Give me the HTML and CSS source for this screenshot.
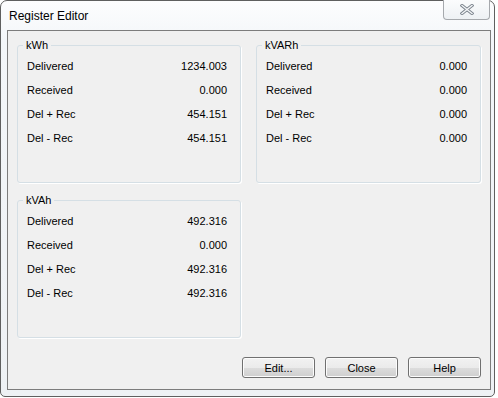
FILE: index.html
```html
<!DOCTYPE html>
<html lang="en">
  <head>
    <meta charset="UTF-8" />
    <title>Register Editor</title>
    <link rel="stylesheet" href="styles.css">
  </head>
  <body>
    <div class="window">
      <div class="titlebar">
        <span class="title">Register Editor</span>
        <div class="close-btn">
          <svg width="14" height="11" viewBox="0 0 14 11">
            <path d="M2 1.5 L12 9.5 M12 1.5 L2 9.5" stroke="#7b838c" stroke-width="3.2" stroke-linecap="square" fill="none" />
            <path d="M2 1.5 L12 9.5 M12 1.5 L2 9.5" stroke="#f4f6f8" stroke-width="1.4" stroke-linecap="square" fill="none" />
          </svg>
        </div>
      </div>
      <div class="client">
        <div class="groups">
          <div class="group">
            <span class="legend">kWh</span>
            <div class="row"><span>Delivered</span><span>1234.003</span></div>
            <div class="row"><span>Received</span><span>0.000</span></div>
            <div class="row"><span>Del + Rec</span><span>454.151</span></div>
            <div class="row"><span>Del - Rec</span><span>454.151</span></div>
          </div>
          <div class="group">
            <span class="legend">kVARh</span>
            <div class="row"><span>Delivered</span><span>0.000</span></div>
            <div class="row"><span>Received</span><span>0.000</span></div>
            <div class="row"><span>Del + Rec</span><span>0.000</span></div>
            <div class="row"><span>Del - Rec</span><span>0.000</span></div>
          </div>
          <div class="group">
            <span class="legend">kVAh</span>
            <div class="row"><span>Delivered</span><span>492.316</span></div>
            <div class="row"><span>Received</span><span>0.000</span></div>
            <div class="row"><span>Del + Rec</span><span>492.316</span></div>
            <div class="row"><span>Del - Rec</span><span>492.316</span></div>
          </div>
        </div>
        <div class="buttons">
          <button>Edit...</button>
          <button>Close</button>
          <button>Help</button>
        </div>
      </div>
    </div>
  </body>
</html>
```

FILE: styles.css
```css
body {
  margin: 0;
  padding: 0;
  background-color: #fff;
  font-family: "Liberation Sans", Arial, sans-serif;
  color: #000;
}
.window {
  width: 495px;
  height: 397px;
  box-sizing: border-box;
  border: 1px solid #5f5f5f;
  border-radius: 7px 7px 5px 5px;
  background: linear-gradient(#fdfdfe, #f3f6f9 40px, #eef1f4);
  display: flex;
  flex-direction: column;
}
.titlebar {
  height: 29px;
  display: flex;
  justify-content: space-between;
  align-items: center;
  flex-shrink: 0;
}
.title {
  font-size: 12px;
  margin-left: 8px;
  margin-top: 1px;
}
.close-btn {
  align-self: flex-start;
  margin-top: -1px;
  margin-right: 4px;
  width: 47px;
  height: 20px;
  box-sizing: border-box;
  border: 1px solid #a6a9ad;
  border-top: none;
  border-radius: 0 0 4px 4px;
  background: linear-gradient(#fbfcfd, #eef1f4);
  display: flex;
  align-items: center;
  justify-content: center;
}
.client {
  flex: 1;
  margin: 0 3px 6px 6px;
  border: 1px solid #7c7c7c;
  background-color: #f0f0f0;
  display: flex;
  flex-direction: column;
  font-size: 11px;
}
.groups {
  display: grid;
  grid-template-columns: 224px 225px;
  grid-auto-rows: 138px;
  column-gap: 15px;
  row-gap: 17px;
  padding: 14px 0 0 9px;
}
.group {
  position: relative;
  border: 1px solid #d5dfe5;
  border-radius: 3px;
  box-shadow: 1px 1px 0 #fff;
  padding: 8px 13px 0 9px;
}
.legend {
  position: absolute;
  top: -7px;
  left: 5px;
  padding: 0 3px;
  background-color: #f0f0f0;
  line-height: 13px;
}
.row {
  display: flex;
  justify-content: space-between;
  height: 24px;
  line-height: 24px;
}
.buttons {
  margin-top: auto;
  display: flex;
  justify-content: flex-end;
  gap: 10px;
  padding: 0 9px 11px 0;
}
.buttons button {
  width: 73px;
  height: 21px;
  padding: 0;
  font-family: "Liberation Sans", Arial, sans-serif;
  font-size: 11px;
  color: #000;
  border: 1px solid #707070;
  border-radius: 3px;
  background: linear-gradient(#f2f2f2, #ebebeb 50%, #dddddd 50%, #cfcfcf);
  box-shadow: inset 0 0 0 1px #fcfcfc;
}
```
